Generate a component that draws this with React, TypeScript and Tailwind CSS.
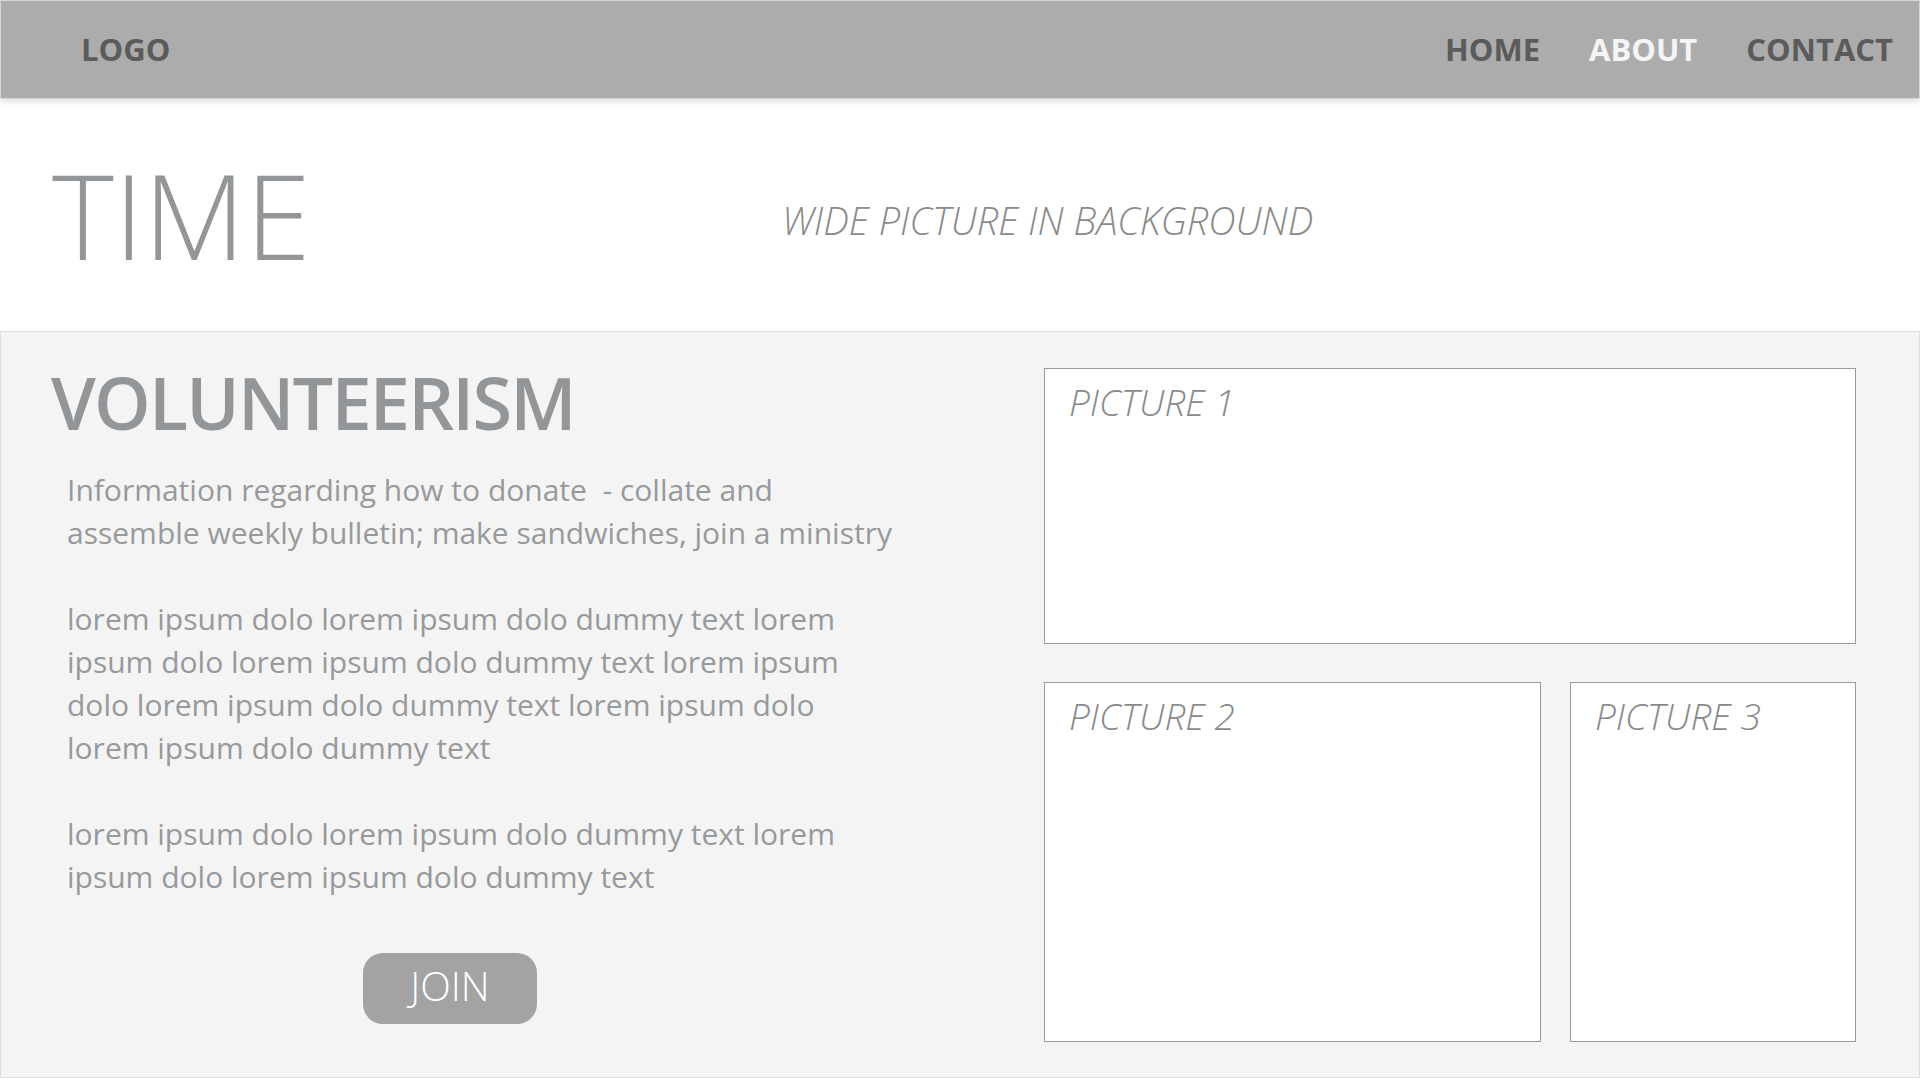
import React from "react";

const font = { fontFamily: '"Open Sans", "Noto Sans", sans-serif' };

function PictureBox({ label, className }: { label: string; className: string }) {
  return (
    <div className={`bg-white border border-[#9a9a9a] ${className}`}>
      <div className="pl-[24px] pt-[9px] text-[37px] leading-[48px] italic font-light text-[#8a8a8a]">
        {label}
      </div>
    </div>
  );
}

export default function App() {
  return (
    <div className="w-[1920px] h-[1080px] bg-white overflow-hidden" style={font}>
      {/* Top bar */}
      <header className="h-[99px] bg-[#acacac] border border-[#d6d6d6] shadow-[0_3px_6px_rgba(0,0,0,0.12)] flex items-center justify-between pl-[80px] pr-[26px] relative z-10">
        <div className="text-[31px] font-bold text-[#5b5b5b]">LOGO</div>
        <nav className="flex items-center gap-[49px] text-[31px] font-bold">
          <a className="text-[#5b5b5b]">HOME</a>
          <a className="text-[#f5f5f5]">ABOUT</a>
          <a className="text-[#5b5b5b]">CONTACT</a>
        </nav>
      </header>

      {/* Hero */}
      <section className="h-[232px] flex items-center">
        <h1 className="w-[740px] pl-[52px] text-[118px] leading-none font-light text-[#939699]">TIME</h1>
        <p className="pl-[42px] pt-[10px] text-[38px] leading-none italic font-light text-[#8a8a8a]">
          WIDE PICTURE IN BACKGROUND
        </p>
      </section>

      {/* Volunteer section */}
      <section className="h-[747px] bg-[#f4f4f4] border border-[#dedede] flex">
        <div className="w-[1043px] pl-[50px] pt-[34px]">
          <h2 className="text-[72px] leading-none font-semibold tracking-[-1.8px] text-[#939699]">VOLUNTEERISM</h2>
          <div className="pl-[16px] mt-[30px] text-[30px] leading-[43px] text-[#97999b]">
            <p>
              Information regarding how to donate&nbsp; - collate and
              <br />
              assemble weekly bulletin; make sandwiches, join a ministry
            </p>
            <p className="mt-[43px]">
              lorem ipsum dolo lorem ipsum dolo dummy text lorem
              <br />
              ipsum dolo lorem ipsum dolo dummy text lorem ipsum
              <br />
              dolo lorem ipsum dolo dummy text lorem ipsum dolo
              <br />
              lorem ipsum dolo dummy text
            </p>
            <p className="mt-[43px]">
              lorem ipsum dolo lorem ipsum dolo dummy text lorem
              <br />
              ipsum dolo lorem ipsum dolo dummy text
            </p>
          </div>
          <button className="ml-[312px] mt-[55px] w-[174px] h-[71px] rounded-[20px] bg-[#a3a3a3] text-white text-[40px] font-light flex items-center justify-center pb-[6px]">
            JOIN
          </button>
        </div>

        <div className="pt-[36px] w-[812px] flex flex-col gap-[38px]">
          <PictureBox label="PICTURE 1" className="h-[276px]" />
          <div className="flex gap-[29px]">
            <PictureBox label="PICTURE 2" className="w-[497px] h-[360px]" />
            <PictureBox label="PICTURE 3" className="w-[286px] h-[360px]" />
          </div>
        </div>
      </section>
    </div>
  );
}
